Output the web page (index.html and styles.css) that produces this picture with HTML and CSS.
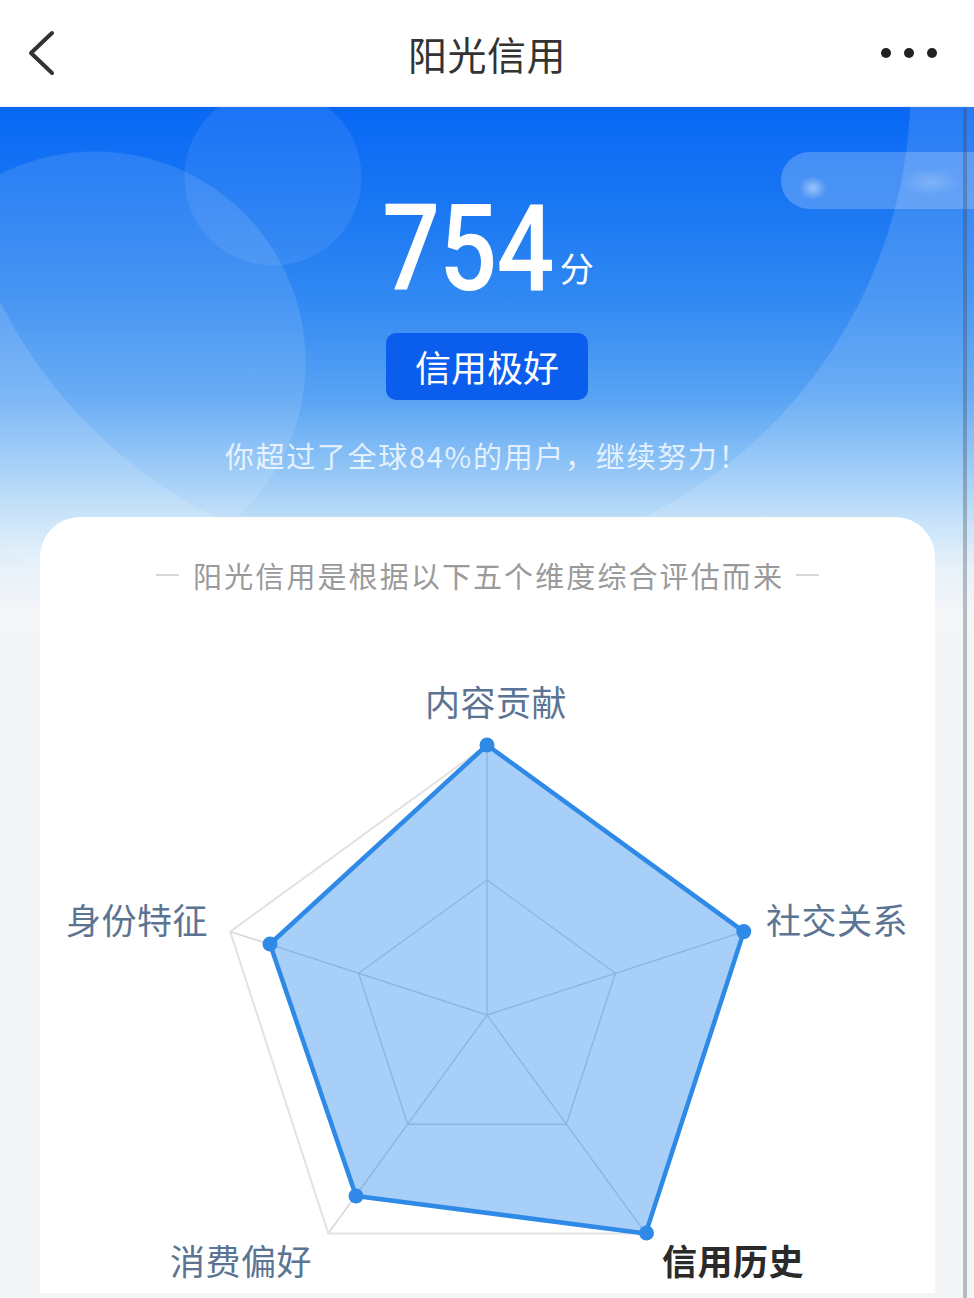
FILE: index.html
```html
<!DOCTYPE html>
<html lang="zh-CN">
<head>
<meta charset="utf-8">
<title>阳光信用</title>
<link rel="stylesheet" href="styles.css">
</head>
<body>
<div class="app">
  <header class="nav">
    <svg class="back" viewBox="0 0 40 50" width="40" height="50">
      <polyline points="32,5 11,25 32,45" fill="none" stroke="#333" stroke-width="4" stroke-linecap="round" stroke-linejoin="round"/>
    </svg>
    <h1 class="title">阳光信用</h1>
    <div class="more"><i></i><i></i><i></i></div>
  </header>
  <main class="main">
    <div class="blur-pill"></div>
    <section class="hero">
      <div class="score"><span class="num">754</span><span class="unit">分</span></div>
      <div class="badge">信用极好</div>
      <p class="rank">你超过了全球84%的用户，继续努力！</p>
    </section>
    <section class="card">
      <h2 class="card-title"><span class="dash"></span><span class="card-title-text">阳光信用是根据以下五个维度综合评估而来</span><span class="dash"></span></h2>
      <svg class="radar" viewBox="0 0 895 698" width="895" height="698">
        <g class="grid">
          <line x1="447" y1="420" x2="447" y2="150"/>
          <line x1="447" y1="420" x2="703.8" y2="336.6"/>
          <line x1="447" y1="420" x2="605.7" y2="638.4"/>
          <line x1="447" y1="420" x2="288.3" y2="638.4"/>
          <line x1="447" y1="420" x2="190.2" y2="336.6"/>
          <polygon class="ring-in" points="447,285 575.4,378.3 526.4,529.2 367.6,529.2 318.6,378.3"/>
          <polygon class="ring-out" points="447,150 703.8,336.6 605.7,638.4 288.3,638.4 190.2,336.6"/>
        </g>
        <polygon class="area" points="447,150 703.8,336.6 605.7,638.4 316,601 230,349"/>
        <g class="dots">
          <circle cx="447" cy="150" r="7.5"/>
          <circle cx="703.8" cy="336.6" r="7.5"/>
          <circle cx="606.5" cy="638" r="7.5"/>
          <circle cx="316" cy="601" r="7.5"/>
          <circle cx="230" cy="349" r="7.5"/>
        </g>
        <g class="labels">
          <text x="456" y="121" text-anchor="middle">内容贡献</text>
          <text x="26" y="339">身份特征</text>
          <text x="726" y="339">社交关系</text>
          <text x="130" y="680">消费偏好</text>
          <text class="strong" x="622" y="680">信用历史</text>
        </g>
      </svg>
    </section>
  </main>
  <div class="scrollbar"></div>
</div>
</body>
</html>
```
FILE: styles.css
```css
* { box-sizing: border-box; }
html, body { margin: 0; padding: 0; }
body {
  background: #f4f5f7;
  font-family: "Noto Sans CJK SC", "Noto Sans", sans-serif;
  color: #333;
}
.app {
  position: relative;
  width: 974px;
  height: 1298px;
  overflow: hidden;
  background: #f4f5f7;
}
.nav {
  height: 107px;
  background: #fff;
  display: grid;
  grid-template-columns: 1fr auto 1fr;
  align-items: center;
  border-bottom: 1px solid #eef0f3;
}
.back { justify-self: start; margin-left: 20px; display: block; }
.title {
  margin: 0;
  font-size: 39px;
  font-weight: 400;
  color: #333;
  line-height: 1;
  letter-spacing: 0.5px;
}
.more {
  justify-self: end;
  margin-right: 37px;
  display: flex;
  gap: 13px;
}
.more i {
  width: 10px;
  height: 10px;
  border-radius: 50%;
  background: #222;
  display: block;
}
.main {
  position: relative;
  background-color: #f4f5f7;
  background-image:
    radial-gradient(circle at 273px 70px, rgba(255,255,255,0.08) 88px, rgba(255,255,255,0) 89px),
    radial-gradient(circle at 95px 255px, rgba(255,255,255,0.11) 210px, rgba(255,255,255,0) 211px),
    radial-gradient(circle at 430px -20px, rgba(255,255,255,0) 480px, rgba(255,255,255,0.13) 481px),
    linear-gradient(180deg, #0868f5 0px, #1674f3 80px, #3088f2 190px, #58a3f4 290px, #8fc4f6 360px, #c4e1f8 420px, #e3eff8 460px, #f4f5f7 510px);
  background-size: 100% 520px;
  background-repeat: no-repeat;
}
.blur-pill {
  position: absolute;
  left: 781px;
  top: 45px;
  width: 220px;
  height: 57px;
  border-radius: 29px;
  background:
    radial-gradient(ellipse 14px 12px at 32px 36px, rgba(255,255,255,0.45), rgba(255,255,255,0)),
    radial-gradient(ellipse 30px 14px at 150px 30px, rgba(255,255,255,0.2), rgba(255,255,255,0)),
    rgba(255,255,255,0.22);
}
.hero {
  text-align: center;
  padding-top: 82px;
}
.score {
  height: 120px;
  line-height: 120px;
  white-space: nowrap;
}
.num {
  display: inline-block;
  font-family: Roboto, "Noto Sans", sans-serif;
  font-weight: 500;
  font-size: 120px;
  line-height: 120px;
  color: #fff;
  transform: scaleX(0.85);
  transform-origin: right center;
  margin-left: -28px;
  letter-spacing: -1px;
}
.unit {
  display: inline-block;
  font-size: 34px;
  line-height: 34px;
  color: #fff;
  margin-left: 6px;
  vertical-align: 8px;
}
.badge {
  width: 202px;
  height: 67px;
  margin: 24px auto 0;
  background: #0b5ded;
  border-radius: 10px;
  color: #fff;
  font-size: 36px;
  line-height: 67px;
  text-align: center;
}
.rank {
  margin: 35px 0 0;
  font-size: 29px;
  line-height: 40px;
  color: rgba(255,255,255,0.8);
  letter-spacing: 1.7px;
}
.card {
  margin: 42px 39px 0 40px;
  height: 776px;
  background: #fff;
  border-radius: 40px 40px 0 0;
  padding-top: 38px;
}
.card-title {
  margin: 0;
  display: flex;
  align-items: center;
  justify-content: center;
  gap: 14px;
  font-size: 29px;
  font-weight: 400;
  line-height: 40px;
  color: #9a9a9a;
}
.card-title-text { letter-spacing: 2.1px; margin-right: -2.1px; }
.dash {
  width: 23px;
  height: 2px;
  background: #d8d8d8;
  display: block;
}
.radar { display: block; }
.grid line { stroke: #d0d3d7; stroke-width: 1.4; }
.grid polygon { fill: none; }
.ring-in { stroke: #d0d3d7; stroke-width: 1.4; }
.ring-out { stroke: #e2e2e2; stroke-width: 2; }
.area {
  fill: rgba(46,140,235,0.42);
  stroke: #2e8ae6;
  stroke-width: 4.5;
  stroke-linejoin: round;
}
.dots circle { fill: #2e8ae6; }
.labels text {
  font-family: "Noto Sans CJK SC", sans-serif;
  font-size: 35px;
  fill: #5b7493;
  letter-spacing: 0.5px;
}
.labels text.strong { fill: #2a2a2a; font-weight: 700; }
.scrollbar {
  position: absolute;
  left: 963px;
  top: 108px;
  width: 4px;
  bottom: 0;
  background: rgba(60,70,80,0.33);
}
```
